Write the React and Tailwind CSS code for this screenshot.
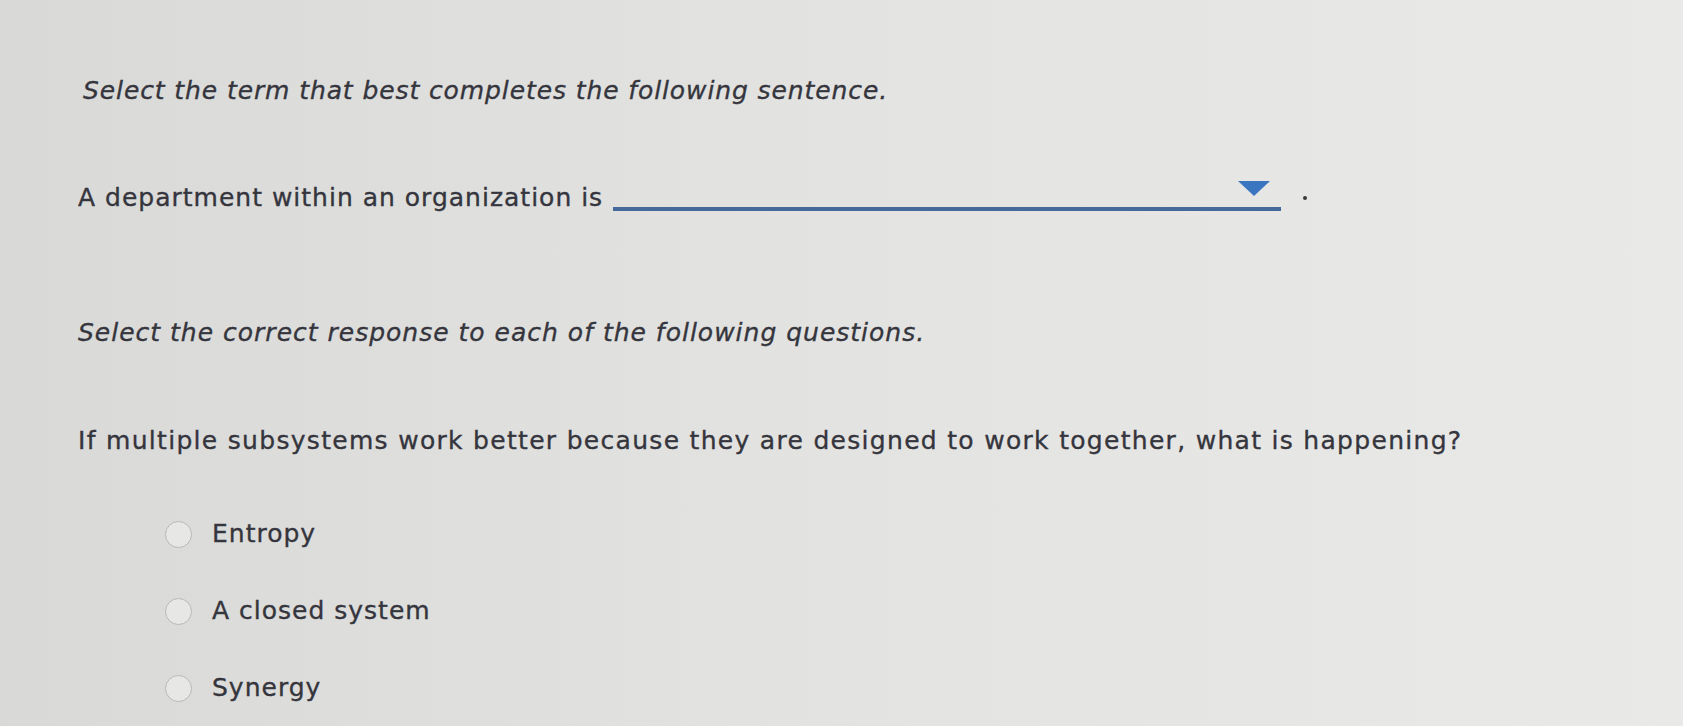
import React from "react";

function Radio({ label }) {
  return (
    <div className="flex items-center h-[28px]">
      <span className="ml-[87px] w-[27px] h-[27px] rounded-full border-[1.5px] border-[#b8b8b8] bg-[#e7e7e5]" />
      <span className="ml-[20px]">{label}</span>
    </div>
  );
}

export default function App() {
  return (
    <div
      className="w-[1683px] h-[726px] overflow-hidden bg-linear-to-r from-[#d9d9d7] via-[#e3e3e1] to-[#e9e9e7] text-[#35353d] text-[25px] leading-[28px] tracking-[1px] [-webkit-text-stroke:0.35px_#35353d]"
      style={{ fontFamily: '"DejaVu Sans", Verdana, sans-serif' }}
    >
      <div className="flex flex-col pl-[78px] pt-[77px]">
        <div className="italic h-[28px] pl-[5px] tracking-[0.9px]">Select the term that best completes the following sentence.</div>
        <div className="mt-[79px] h-[28px] flex items-start">
          <span>A department within an organization is</span>
          <div className="relative ml-[10px] w-[668px] h-[27px] border-b-[4px] border-[#46699c]">
            <svg className="absolute right-[11px] top-[-3px]" width="32" height="15" viewBox="0 0 32 15">
              <polygon points="0,0 32,0 16,15" fill="#3a76c0" />
            </svg>
          </div>
          <span className="ml-[22px] mt-[12px] w-[4px] h-[4px] rounded-full bg-[#3a3a3a]" />
        </div>
        <div className="mt-[107px] italic h-[28px]">Select the correct response to each of the following questions.</div>
        <div className="mt-[80px] h-[28px] tracking-[1.3px]">If multiple subsystems work better because they are designed to work together, what is happening?</div>
        <div className="mt-[65px] flex flex-col gap-[49px]">
          <Radio label="Entropy" />
          <Radio label="A closed system" />
          <Radio label="Synergy" />
        </div>
      </div>
    </div>
  );
}
